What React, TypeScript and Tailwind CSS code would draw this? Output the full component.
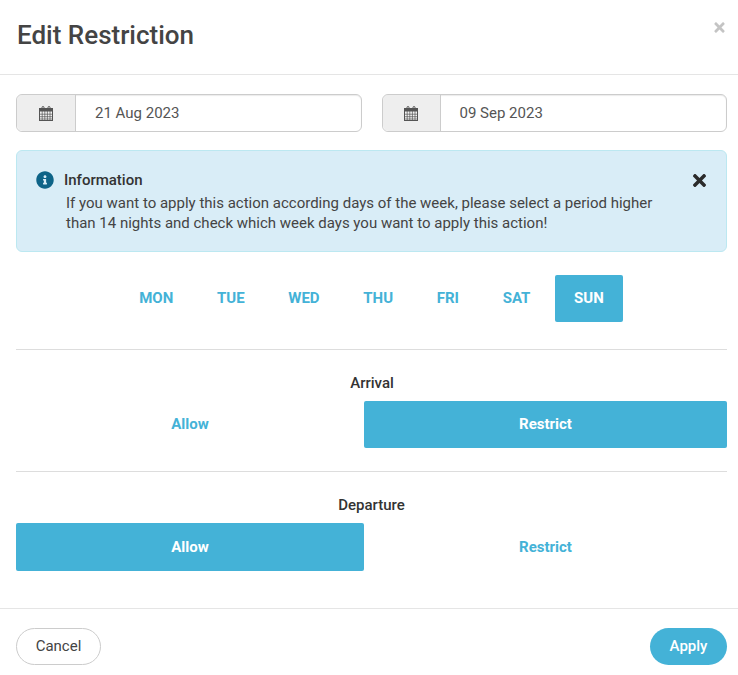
import { FaInfoCircle, FaTimes } from "react-icons/fa";

const days = ["MON", "TUE", "WED", "THU", "FRI", "SAT", "SUN"];

function CalendarIcon() {
  return (
    <svg width="14" height="15" viewBox="0 0 14 15" className="text-[#555]">
      <rect x="0.5" y="2.5" width="13" height="12" fill="#f4f4f4" stroke="currentColor" />
      <rect x="0.5" y="2.5" width="13" height="3" fill="currentColor" />
      <path d="M0 8.2h14M0 10.7h14M0 13h14M3.2 5v10M5.8 5v10M8.4 5v10M11 5v10" stroke="currentColor" strokeWidth="0.7" />
      <path d="M3 4V1.5a1 1 0 0 1 2 0V4M9 4V1.5a1 1 0 0 1 2 0V4" fill="none" stroke="currentColor" strokeWidth="1" />
    </svg>
  );
}

function DateField({ value, addonClass }: { value: string; addonClass: string }) {
  return (
    <div className="flex h-[38px] flex-1 rounded-md border border-[#ccc] bg-white shadow-[inset_0_1px_1px_rgba(0,0,0,0.08)]">
      <div className={"flex items-center justify-center rounded-l-md border-r border-[#ccc] bg-[#eee] " + addonClass}>
        <CalendarIcon />
      </div>
      <div className="flex items-center pl-[19px] text-[15px] text-[#555]">{value}</div>
    </div>
  );
}

function Toggle({ active, heightClass }: { active: "Allow" | "Restrict"; heightClass: string }) {
  return (
    <div className="flex">
      {(["Allow", "Restrict"] as const).map((opt) => (
        <div
          key={opt}
          className={
            "flex items-center justify-center rounded-[2px] text-[15px] font-bold " +
            heightClass +
            (opt === "Allow" ? " w-[348px] " : " flex-1 ") +
            (opt === active ? "bg-[#44b2d7] text-white" : "text-[#44b2d7]")
          }
        >
          {opt}
        </div>
      ))}
    </div>
  );
}

export default function App() {
  return (
    <div className="h-[675px] w-[738px] overflow-hidden bg-white font-['Roboto',sans-serif] text-[#333]">
      {/* Header */}
      <div className="flex h-[75px] items-start justify-between border-b border-[#e5e5e5] pr-[11px] pl-[17px]">
        <h4 className="mt-[18px] text-[26px] leading-[34px] font-medium text-[#444]">Edit Restriction</h4>
        <FaTimes className="mt-[20px] text-[15px] text-[#c4c4c4]" />
      </div>

      <div className="pr-[11px] pl-[16px]">
        <div className="mt-[19px] flex gap-[20px]">
          <DateField value="21 Aug 2023" addonClass="w-[59px]" />
          <DateField value="09 Sep 2023" addonClass="w-[58px]" />
        </div>

        {/* Alert */}
        <div className="mt-[18px] flex h-[102px] items-start rounded-md border border-[#bce8f1] bg-[#d9edf7] pt-[20px] pr-[17px] pl-[19px]">
          <FaInfoCircle className="shrink-0 text-[18px] text-[#0e6488]" />
          <div className="ml-[10px] flex-1">
            <div className="text-[15px] leading-[18px] font-medium text-[#333]">Information</div>
            <div className="mt-[4px] pl-[2px] text-[15px] leading-[20px] text-[#444]">
              If you want to apply this action according days of the week, please select a period higher
              <br />
              than 14 nights and check which week days you want to apply this action!
            </div>
          </div>
          <FaTimes className="shrink-0 text-[19px] text-[#2b2b2b]" />
        </div>

        {/* Days */}
        <div className="mt-[23px] flex justify-center gap-[4.7px]">
          {days.map((d) => (
            <div
              key={d}
              className={
                "flex h-[47px] items-center rounded-[2px] px-[19.5px] text-[15px] font-bold " +
                (d === "SUN" ? "bg-[#44b2d7] text-white" : "text-[#44b2d7]")
              }
            >
              {d}
            </div>
          ))}
        </div>

        <div className="mt-[27px] border-t border-[#ddd]" />

        <div className="mt-[24px] pl-[1px] text-center text-[15px] leading-[18px] font-medium">Arrival</div>
        <div className="mt-[9px]">
          <Toggle active="Restrict" heightClass="h-[47px]" />
        </div>

        <div className="mt-[23px] border-t border-[#ddd]" />

        <div className="mt-[24px] text-center text-[15px] leading-[18px] font-medium">Departure</div>
        <div className="mt-[9px]">
          <Toggle active="Allow" heightClass="h-[48px]" />
        </div>
      </div>

      {/* Footer */}
      <div className="mt-[37px] flex items-center justify-between border-t border-[#e5e5e5] pt-[19px] pr-[11px] pl-[16px]">
        <button className="h-[37px] w-[85px] rounded-full border border-[#ccc] bg-white text-[15px] text-[#444]">Cancel</button>
        <button className="h-[37px] w-[77px] rounded-full bg-[#44b2d7] text-[15px] font-medium text-white">Apply</button>
      </div>
    </div>
  );
}
